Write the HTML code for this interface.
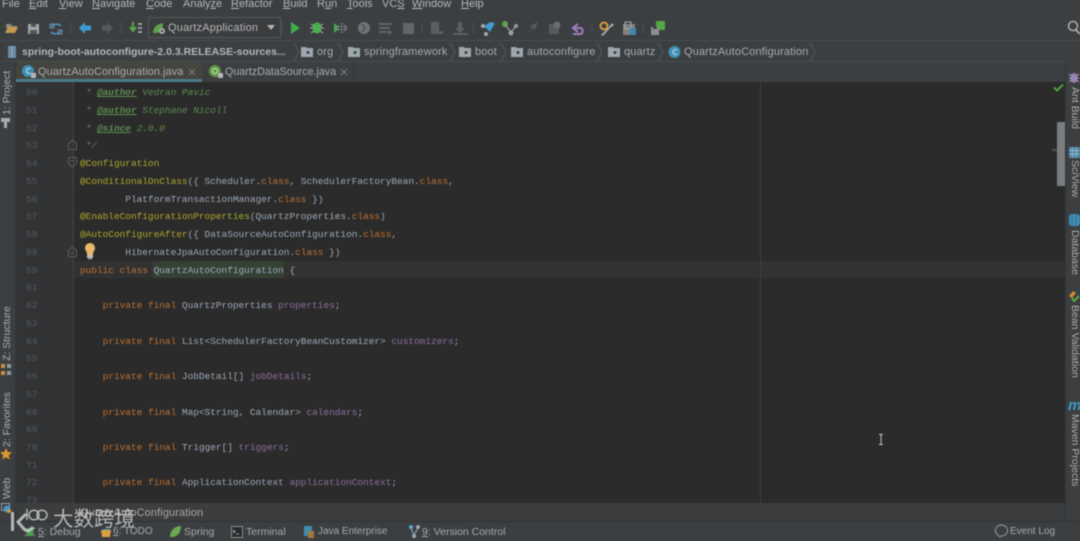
<!DOCTYPE html>
<html><head><meta charset="utf-8"><style>
html,body{margin:0;padding:0;background:#3c3f41}
#r{position:relative;width:1080px;height:541px;overflow:hidden;background:#3c3f41;filter:blur(.6px);font-family:"Liberation Sans",sans-serif;color:#b4b6b8}
#r div,#r svg{position:absolute}
.m{font-size:11px;top:-3px;line-height:14px;color:#b5b7b9;white-space:pre}
.m u{text-decoration:underline}
.b{font-size:11px;top:45px;line-height:14px;color:#a9abad;white-space:pre;letter-spacing:.15px}
.c{font-family:"Liberation Mono",monospace;font-size:9.5px;line-height:14px;left:80px;margin-top:1px;white-space:pre;color:#a9b7c6;letter-spacing:-.04px;opacity:.9}
.n{font-family:"Liberation Mono",monospace;font-size:9.5px;line-height:14px;left:26px;margin-top:1px;color:#56595b}
.k{color:#cc7832}.a{color:#bbb529}.f{color:#9876aa}
.d{color:#629755;font-style:italic}.t{font-weight:bold;text-decoration:underline}
.s{font-size:10.5px;top:525px;line-height:14px;color:#a6a8aa;white-space:pre}
.v{font-size:10.5px;line-height:13px;white-space:pre;color:#aaacae}
.l{transform-origin:0 0;transform:rotate(-90deg)}
.q{transform-origin:0 0;transform:rotate(90deg)}
</style></head><body><div id="r">

<!-- menu -->
<div class="m" style="left:2px">File</div>
<div class="m" style="left:29px"><u>E</u>dit</div>
<div class="m" style="left:59px"><u>V</u>iew</div>
<div class="m" style="left:92px"><u>N</u>avigate</div>
<div class="m" style="left:146px"><u>C</u>ode</div>
<div class="m" style="left:183px">Analy<u>z</u>e</div>
<div class="m" style="left:231px"><u>R</u>efactor</div>
<div class="m" style="left:283px"><u>B</u>uild</div>
<div class="m" style="left:317px">R<u>u</u>n</div>
<div class="m" style="left:347px"><u>T</u>ools</div>
<div class="m" style="left:382px">VC<u>S</u></div>
<div class="m" style="left:412px"><u>W</u>indow</div>
<div class="m" style="left:461px"><u>H</u>elp</div>

<!-- toolbar icons -->
<svg style="left:0;top:12px" width="1080" height="30" viewBox="0 12 1080 30">
<g stroke="#4d5052" stroke-width="1"><path d="M71 22v12M121 22v12M282 22v12M422 22v12M473 22v12M592 22v12M643 22v12"/></g>
<path d="M6 24h5l1 2h5v2H6z" fill="#8d8a80"/><path d="M5 33l3-6h10l-3 6z" fill="#c59a50"/>
<path d="M28 24h11v10H28z" fill="#a3a5a7"/><path d="M31 24h5v3h-5zM30 30h7v4h-7z" fill="#55585a"/>
<path d="M51 27a6 5 0 0 1 10-1M61 31a6 5 0 0 1-10 1" fill="none" stroke="#4b93bc" stroke-width="1.6"/><path d="M50 24h4v4h-4zM58 30h4v4h-4z" fill="none" stroke="#6d8a9c" stroke-width="1"/>
<path d="M79 28l6-6v3.500h6v5h-6v3.500z" fill="#3f9ad0"/>
<path d="M113 28l-6-6v3.500h-5v5h5v3.500z" fill="#55585a"/>
<path d="M133 22v8M130 27l3 4 3-4" fill="none" stroke="#56a845" stroke-width="2"/>
<g fill="#9a9c9e"><rect x="138" y="23" width="4" height="2"/><rect x="138" y="27" width="4" height="2"/><rect x="138" y="31" width="4" height="2"/></g>
<rect x="148.500" y="17.500" width="132" height="20" fill="#3a3c3e" stroke="#55585a"/>
<path d="M153 33c0-6 4-9 10-10 0 6-2 10-7 10z" fill="#5da04a"/><circle cx="162" cy="31" r="3" fill="#a5a7a9"/><circle cx="162" cy="31" r="1" fill="#3a3c3e"/>
<path d="M267 25h8l-4 5z" fill="#b0b2b4"/>
<path d="M291 22l9 6-9 6z" fill="#3fae4a"/>
<ellipse cx="317" cy="28" rx="4.500" ry="5.500" fill="#46b04c"/><path d="M311 24l3 2M323 24l-3 2M310 28h3M324 28h-3M311 33l3-2M323 33l-3-2" stroke="#b6b8ba" stroke-width="1"/>
<path d="M334 23l6 5-6 5z" fill="#3fae4a"/><circle cx="342" cy="28" r="5" fill="#77797b"/><path d="M338 25h8M338 28h8M338 31h8M340 23v10M343 23v10" stroke="#3c3f41" stroke-width="1"/>
<circle cx="364" cy="28" r="6" fill="#6f7173"/><path d="M362 24l3 4-3 4" stroke="#3c3f41" fill="none"/>
<path d="M379 23h13v2h-13zM379 27h11v2h-11zM379 31h8v2h-8z" fill="#636567"/><path d="M388 30l5 2.500-5 2.500z" fill="#636567"/>
<rect x="403" y="23" width="11" height="11" fill="#636567"/>
<path d="M431 22h8v9h4v3h-12z" fill="#5c5e60"/>
<path d="M458 22h4v6h3l-5 5-5-5h3zM453 33h15v2h-15z" fill="#5c5e60"/>
<path d="M490 22l5 1-5 9-4-4-3-1z" fill="#3f9ad0"/><circle cx="483" cy="26" r="2" fill="#a5a7a9"/><circle cx="486" cy="34" r="2" fill="#a5a7a9"/>
<circle cx="505" cy="24" r="3" fill="#56a845"/><circle cx="516" cy="26" r="2" fill="#9a9c9e"/><circle cx="511" cy="33" r="2.500" fill="#9a9c9e"/><path d="M505 25l6 7 5-6" fill="none" stroke="#9a9c9e" stroke-width="1.300"/>
<path d="M527 33l5-5-2-2 8-4-3 8-2-2-5 5z" fill="#55585a"/>
<path d="M549 24h10v10h-10z" fill="#595b5d"/><circle cx="557" cy="25" r="3.500" fill="#6a6c6e"/>
<path d="M578 24l-5 4 5 4M574 28h7a3.500 3.500 0 0 1 0 6h-8" fill="none" stroke="#a07cc0" stroke-width="2"/>
<circle cx="604" cy="26" r="3.500" fill="none" stroke="#d89a3a" stroke-width="2"/><path d="M601 35l8-8 3-4 2 2-4 3-7 8z" fill="#a5a7a9"/>
<rect x="623" y="24" width="12" height="11" fill="#7f8183"/><rect x="625" y="22" width="6" height="7" fill="none" stroke="#a5a7a9"/><rect x="630" y="28" width="6" height="7" fill="#3f86b0"/>
<rect x="656" y="21" width="9" height="9" fill="#56a845"/><rect x="651" y="27" width="8" height="8" fill="#8d8f91"/><rect x="653" y="27" width="4" height="2" fill="#3c3f41"/>
<circle cx="1073" cy="26" r="4.500" fill="none" stroke="#a5a7a9" stroke-width="1.600"/><path d="M1076 30l4 4" stroke="#a5a7a9" stroke-width="2"/>
</svg>
<div class="m" style="left:168px;top:21px;font-size:11px;letter-spacing:.2px">QuartzApplication</div>

<!-- breadcrumb -->
<div style="left:0;top:40px;width:1080px;height:1px;background:#484b4d"></div>
<div style="left:0;top:61px;width:1065px;height:1px;background:#484b4d"></div>
<svg style="left:0;top:41px" width="1080" height="22" viewBox="0 41 1080 22">
<rect x="8" y="46" width="8" height="12" fill="#6b8ba4"/><path d="M12 46v12" stroke="#a8bccb" stroke-dasharray="2 1"/>
<g fill="none" stroke="#55585a"><path d="M294 43l5 9-5 9M338 43l5 9-5 9M450 43l5 9-5 9M501 43l5 9-5 9M597 43l5 9-5 9M658 43l5 9-5 9M810 43l5 9-5 9"/></g>
<g fill="#9ea7ad"><path d="M301 47h5l1 1h6v9h-12zM348 47h5l1 1h6v9h-12zM459 47h5l1 1h6v9h-12zM511 47h5l1 1h6v9h-12zM608 47h5l1 1h6v9h-12z"/></g>
<g fill="#3c3f41"><circle cx="308" cy="52.500" r="1.500"/><circle cx="355" cy="52.500" r="1.500"/><circle cx="466" cy="52.500" r="1.500"/><circle cx="518" cy="52.500" r="1.500"/><circle cx="615" cy="52.500" r="1.500"/></g>
<circle cx="674.500" cy="52" r="6" fill="#3f8fb5"/><path d="M677 50a2.500 2.500 0 1 0 0 4" fill="none" stroke="#d5e5ee" stroke-width="1"/>
</svg>
<div class="b" style="left:22px;font-weight:bold;font-size:10.500px;color:#b4b6b8;letter-spacing:0">spring-boot-autoconfigure-2.0.3.RELEASE-sources...</div>
<div class="b" style="left:317px">org</div>
<div class="b" style="left:364px">springframework</div>
<div class="b" style="left:475px">boot</div>
<div class="b" style="left:527px">autoconfigure</div>
<div class="b" style="left:624px">quartz</div>
<div class="b" style="left:684px">QuartzAutoConfiguration</div>

<!-- tabs -->
<div style="left:16px;top:62px;width:186px;height:17px;background:#45443f"></div>
<div style="left:16px;top:79px;width:186px;height:3px;background:#4a7c8c"></div>
<div style="left:353px;top:62px;width:1px;height:20px;background:#333638"></div>
<svg style="left:16px;top:62px" width="340" height="20" viewBox="16 62 340 20">
<circle cx="28" cy="71" r="6" fill="#3f8fb5"/><path d="M30.500 69a2.500 2.500 0 1 0 0 4" fill="none" stroke="#d5e5ee"/><rect x="31" y="73" width="5" height="5" fill="#b5b7b9"/>
<circle cx="215" cy="71" r="6" fill="#5f9a44"/><circle cx="215" cy="71" r="2.500" fill="none" stroke="#d8e8d0"/><rect x="218" y="73" width="5" height="5" fill="#b5b7b9"/>
<path d="M189 69l6 6M195 69l-6 6M341 69l6 6M347 69l-6 6" stroke="#77797b" stroke-width="1.100"/>
</svg>
<div class="b" style="left:38px;top:65px;letter-spacing:.04px">QuartzAutoConfiguration.java</div>
<div class="b" style="left:225px;top:65px;font-size:10.700px;letter-spacing:0">QuartzDataSource.java</div>

<!-- editor -->
<div style="left:16px;top:82px;width:57px;height:421px;background:#313335"></div>
<div style="left:73px;top:82px;width:1px;height:421px;background:#424446"></div>
<div style="left:74px;top:82px;width:991px;height:421px;background:#2b2b2b"></div>
<div style="left:74px;top:261px;width:991px;height:17px;background:#323232"></div>
<div style="left:153px;top:261px;width:131px;height:17px;background:#344134"></div>
<div style="left:760px;top:82px;width:1px;height:421px;background:#3d3f40"></div>

<div class="n" style="top:85px">50</div><div class="n" style="top:103px">51</div><div class="n" style="top:121px">52</div><div class="n" style="top:138px">53</div><div class="n" style="top:156px">54</div><div class="n" style="top:174px">55</div><div class="n" style="top:192px">56</div><div class="n" style="top:209px">57</div><div class="n" style="top:227px">58</div><div class="n" style="top:245px">59</div><div class="n" style="top:263px">60</div><div class="n" style="top:280px">61</div><div class="n" style="top:298px">62</div><div class="n" style="top:316px">63</div><div class="n" style="top:334px">64</div><div class="n" style="top:351px">65</div><div class="n" style="top:369px">66</div><div class="n" style="top:387px">67</div><div class="n" style="top:405px">68</div><div class="n" style="top:422px">69</div><div class="n" style="top:440px">70</div><div class="n" style="top:458px">71</div><div class="n" style="top:475px">72</div><div class="n" style="top:493px">73</div>

<div class="c d" style="top:85px"> * <span class="t">@author</span> Vedran Pavic</div>
<div class="c d" style="top:103px"> * <span class="t">@author</span> Stephane Nicoll</div>
<div class="c d" style="top:121px"> * <span class="t">@since</span> 2.0.0</div>
<div class="c d" style="top:138px"> */</div>
<div class="c a" style="top:156px">@Configuration</div>
<div class="c" style="top:174px"><span class="a">@ConditionalOnClass</span>({ Scheduler.<span class="k">class</span>, SchedulerFactoryBean.<span class="k">class</span>,</div>
<div class="c" style="top:192px">        PlatformTransactionManager.<span class="k">class</span> })</div>
<div class="c" style="top:209px"><span class="a">@EnableConfigurationProperties</span>(QuartzProperties.<span class="k">class</span>)</div>
<div class="c" style="top:227px"><span class="a">@AutoConfigureAfter</span>({ DataSourceAutoConfiguration.<span class="k">class</span>,</div>
<div class="c" style="top:245px">        HibernateJpaAutoConfiguration.<span class="k">class</span> })</div>
<div class="c" style="top:263px"><span class="k">public class</span> QuartzAutoConfiguration {</div>
<div class="c" style="top:298px">    <span class="k">private final</span> QuartzProperties <span class="f">properties</span>;</div>
<div class="c" style="top:334px">    <span class="k">private final</span> List&lt;SchedulerFactoryBeanCustomizer&gt; <span class="f">customizers</span>;</div>
<div class="c" style="top:369px">    <span class="k">private final</span> JobDetail[] <span class="f">jobDetails</span>;</div>
<div class="c" style="top:405px">    <span class="k">private final</span> Map&lt;String, Calendar&gt; <span class="f">calendars</span>;</div>
<div class="c" style="top:440px">    <span class="k">private final</span> Trigger[] <span class="f">triggers</span>;</div>
<div class="c" style="top:475px">    <span class="k">private final</span> ApplicationContext <span class="f">applicationContext</span>;</div>

<svg style="left:60px;top:135px" width="40" height="130" viewBox="60 135 40 130">
<g fill="none" stroke="#5a5d5f"><path d="M68.500 149.500v-6l4-3.500 4 3.500v6zM68.500 157.500h8v6l-4 3.500-4-3.500zM68.500 256.500v-6l4-3.500 4 3.500v6z"/><path d="M70.500 161h4M70.500 253h4"/></g>
<path d="M86 251a5 5 0 1 1 8 0c-1 1-1 3-1 4h-6c0-1 0-3-1-4z" fill="#e8b868"/><rect x="87" y="255" width="6" height="3" fill="#b9bbbd"/><rect x="88" y="258" width="4" height="1.500" fill="#8a8c8e"/>
</svg>

<!-- scrollbar -->
<div style="left:1057px;top:122px;width:8px;height:64px;background:#7b7d7e"></div>
<div style="left:1052px;top:149px;width:5px;height:2px;background:#4b5a3f"></div>
<svg style="left:1053px;top:83px" width="12" height="10"><path d="M1 4.500l3 3 6-6" fill="none" stroke="#4e9a3e" stroke-width="2.200"/></svg>
<svg style="left:877px;top:434px" width="8" height="11"><path d="M2 .5h4M4 .5v10M2 10.500h4" stroke="#c0c0c0" fill="none"/></svg>

<!-- left strip -->
<div style="left:15px;top:62px;width:1px;height:459px;background:#333638"></div>
<div class="v l" style="left:.5px;top:115px">1: Project</div>
<div class="v l" style="left:.5px;top:361px">Z: Structure</div>
<div class="v l" style="left:.5px;top:447px">2: Favorites</div>
<div class="v l" style="left:.5px;top:499px">Web</div>
<svg style="left:0;top:110px" width="16" height="410" viewBox="0 110 16 410">
<path d="M1 118h9v4h-3v6h-3v-6H1z" fill="#a8aaac"/>
<g fill="#c9913a"><rect x="1" y="364" width="4" height="4"/><rect x="1" y="371" width="4" height="4"/></g><g fill="#8a9aa6"><rect x="7" y="364" width="4" height="4"/><rect x="7" y="371" width="4" height="4"/></g>
<path d="M6 448l1.800 4 4.200.4-3.200 2.800 1 4.300L6 457.300 2.200 459.500l1-4.300L0 452.400l4.200-.4z" fill="#d9962e"/>
<rect x="1.500" y="503.500" width="8" height="7" fill="none" stroke="#9a9c9e"/><circle cx="7" cy="509" r="3.500" fill="#3f9ad0"/><circle cx="9" cy="511" r="2" fill="#d9962e"/>
</svg>

<!-- right strip -->
<div style="left:1065px;top:62px;width:1px;height:459px;background:#333638"></div>
<div class="v q" style="left:1081px;top:87px">Ant Build</div>
<div class="v q" style="left:1081px;top:160px">SciView</div>
<div class="v q" style="left:1081px;top:230px">Database</div>
<div class="v q" style="left:1081px;top:305px">Bean Validation</div>
<div class="v q" style="left:1081px;top:414px">Maven Projects</div>
<svg style="left:1066px;top:68px" width="14" height="345" viewBox="1066 68 14 345">
<ellipse cx="1074" cy="78" rx="3.500" ry="5" fill="#9a80b8"/><path d="M1069 74l3 2M1079 74l-3 2M1069 78h3M1079 78h-3M1069 82l3-2M1079 82l-3-2" stroke="#b0a0c8"/>
<rect x="1069" y="147" width="11" height="11" fill="#4d86a8"/><path d="M1072.500 147v11M1076 147v11M1069 150.500h11M1069 154h11" stroke="#a6c2d2" stroke-width=".7"/>
<rect x="1069" y="214" width="11" height="12" rx="3" fill="#3f8fb5"/><path d="M1072 215v10M1076 215v10" stroke="#2d6a88"/>
<path d="M1069 296l4-5 3 2-4 5z" fill="#d08a2e"/><path d="M1072 298l2 3 5-5" fill="none" stroke="#56a845" stroke-width="2"/>
<text x="1068" y="410" font-family="Liberation Sans,sans-serif" font-style="italic" font-weight="bold" font-size="15" fill="#3f9ac8">m</text>
</svg>

<!-- bottom breadcrumb & tool bar -->
<div style="left:16px;top:503px;width:1049px;height:18px;background:#3b3d3f"></div>
<div class="s" style="left:80px;top:506px;font-size:11px;letter-spacing:.1px">QuartzAutoConfiguration</div>
<div style="left:0;top:521px;width:1080px;height:1px;background:#2f3133"></div>
<div style="left:0;top:522px;width:1080px;height:19px;background:#3c3f41"></div>
<div class="s" style="left:38px"><u>5</u>: Debug</div>
<div class="s" style="left:113px;font-size:10px"><u>6</u>: TODO</div>
<div class="s" style="left:184px">Spring</div>
<div class="s" style="left:246px">Terminal</div>
<div class="s" style="left:318px;font-size:10px">Java Enterprise</div>
<div class="s" style="left:422px"><u>9</u>: Version Control</div>
<div class="s" style="left:1010px;font-size:10px">Event Log</div>
<svg style="left:0;top:522px" width="1080" height="19" viewBox="0 522 1080 19">
<ellipse cx="30" cy="532" rx="3.500" ry="4.500" fill="#46a04a"/><path d="M25 528l3 2M35 528l-3 2M25 536l3-2M35 536l-3-2" stroke="#9a9c9e"/>
<rect x="103" y="529" width="7" height="7" fill="#3f8fb5"/><path d="M101 530h10l-1 7h-8z" fill="#d8a040"/>
<path d="M170 537c0-7 5-11 11-11 0 7-4 11-9 11z" fill="#6aa84f"/>
<rect x="231.500" y="526.500" width="11" height="11" fill="#2a2b2c" stroke="#8a8c8e"/><path d="M233 530l2 1.500-2 1.500M236 534h3" stroke="#c0c2c4" fill="none" stroke-width=".8"/>
<rect x="304" y="526" width="8" height="10" fill="#3f8fb5"/><rect x="308" y="531" width="6" height="7" fill="#a8763a"/>
<circle cx="411" cy="527" r="2" fill="#5aa9d6"/><circle cx="418" cy="527" r="2" fill="#a5a7a9"/><circle cx="414" cy="536" r="2" fill="#a5a7a9"/><path d="M411 528l3 7 4-7" fill="none" stroke="#8fa8b8"/>
<path d="M1000 537l-2-2a6 5.500 0 1 1 3 1z" fill="none" stroke="#8a8c8e" stroke-width="1.200"/>
</svg>

<!-- watermark -->
<svg style="left:8px;top:503px" width="46" height="34" viewBox="8 503 46 34">
<g fill="none" stroke="#d0d1d2" stroke-opacity=".82"><path d="M12.500 512v19" stroke-width="3"/><path d="M26 514l-8 8 6 7c3 3 6 2 9-2" stroke-width="3"/><path d="M27 509v11" stroke-width="1.500"/><ellipse cx="34" cy="515" rx="5" ry="4.800" stroke-width="1.500"/><ellipse cx="42" cy="515" rx="5" ry="4.800" stroke-width="1.500"/></g>
</svg>
<div style="left:53px;top:508px;font-family:'Liberation Sans','Noto Sans CJK SC',sans-serif;font-size:20.500px;line-height:24px;color:rgba(225,226,227,.72);white-space:pre">大数跨境</div>
</div></body></html>
